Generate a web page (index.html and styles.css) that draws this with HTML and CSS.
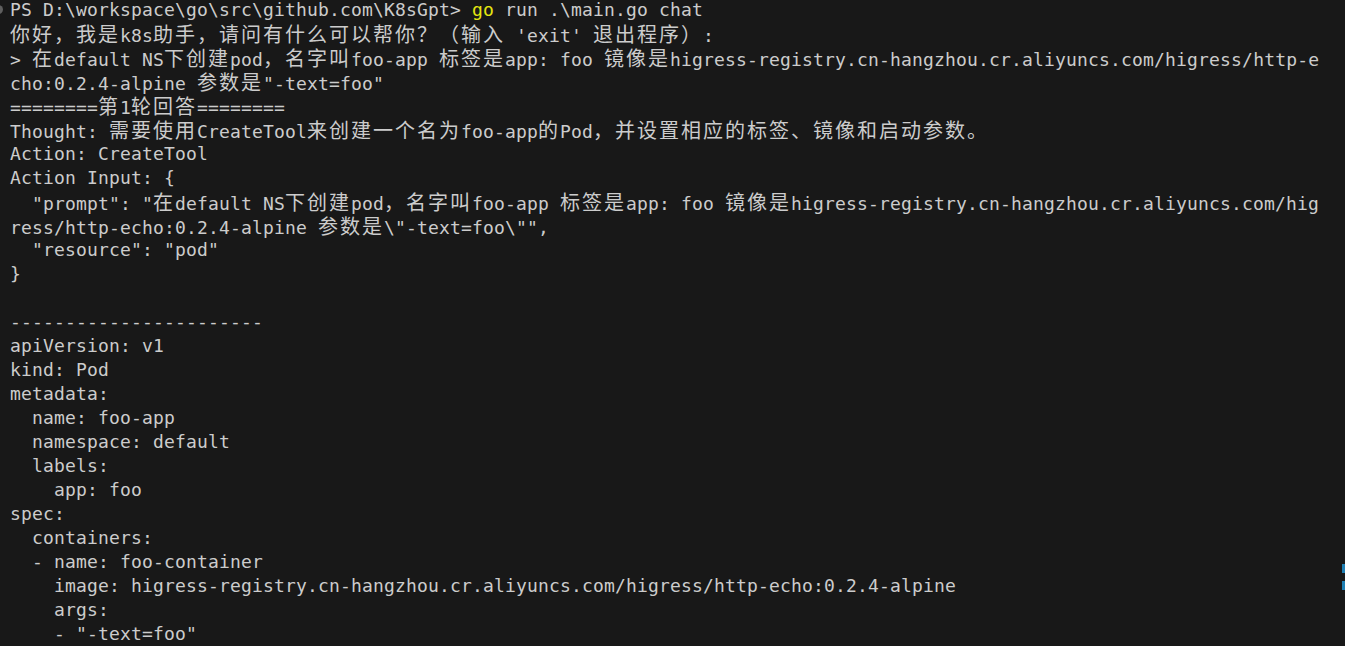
FILE: index.html
```html
<!DOCTYPE html>
<html lang="zh-CN">
<head>
<meta charset="utf-8">
<title>Terminal</title>
<link rel="stylesheet" href="styles.css">
</head>
<body>
<div class="terminal">
  <span class="cmd-mark"></span>
  <div class="screen">
    <div class="ln">PS D:\workspace\go\src\github.com\K8sGpt&gt; <span class="y">go</span> run .\main.go chat</div>
    <div class="ln"><span class="cj">你好，我是</span>k8s<span class="cj">助手，请问有什么可以帮你？（输入</span> 'exit' <span class="cj">退出程序）</span>:</div>
    <div class="ln">&gt; <span class="cj">在</span>default NS<span class="cj">下创建</span>pod<span class="cj">，名字叫</span>foo-app <span class="cj">标签是</span>app: foo <span class="cj">镜像是</span>higress-registry.cn-hangzhou.cr.aliyuncs.com/higress/http-e</div>
    <div class="ln">cho:0.2.4-alpine <span class="cj">参数是</span>"-text=foo"</div>
    <div class="ln">========<span class="cj">第</span>1<span class="cj">轮回答</span>========</div>
    <div class="ln">Thought: <span class="cj">需要使用</span>CreateTool<span class="cj">来创建一个名为</span>foo-app<span class="cj">的</span>Pod<span class="cj">，并设置相应的标签、镜像和启动参数。</span></div>
    <div class="ln">Action: CreateTool</div>
    <div class="ln">Action Input: {</div>
    <div class="ln">  "prompt": "<span class="cj">在</span>default NS<span class="cj">下创建</span>pod<span class="cj">，名字叫</span>foo-app <span class="cj">标签是</span>app: foo <span class="cj">镜像是</span>higress-registry.cn-hangzhou.cr.aliyuncs.com/hig</div>
    <div class="ln">ress/http-echo:0.2.4-alpine <span class="cj">参数是</span>\"-text=foo\"",</div>
    <div class="ln">  "resource": "pod"</div>
    <div class="ln">}</div>
    <div class="ln"></div>
    <div class="ln">-----------------------</div>
    <div class="ln">apiVersion: v1</div>
    <div class="ln">kind: Pod</div>
    <div class="ln">metadata:</div>
    <div class="ln">  name: foo-app</div>
    <div class="ln">  namespace: default</div>
    <div class="ln">  labels:</div>
    <div class="ln">    app: foo</div>
    <div class="ln">spec:</div>
    <div class="ln">  containers:</div>
    <div class="ln">  - name: foo-container</div>
    <div class="ln">    image: higress-registry.cn-hangzhou.cr.aliyuncs.com/higress/http-echo:0.2.4-alpine</div>
    <div class="ln">    args:</div>
    <div class="ln">    - "-text=foo"</div>
  </div>
  <span class="ruler-mark m1"></span>
  <span class="ruler-mark m2"></span>
</div>
</body>
</html>
```
FILE: styles.css
```css
html, body {
  margin: 0;
  padding: 0;
  background: #181818;
  overflow: hidden;
}

.terminal {
  position: relative;
  width: 1345px;
  height: 646px;
  box-sizing: border-box;
  padding: 0 0 0 10px;
  background: #181818;
  color: #cccccc;
  font-family: "DejaVu Sans Mono", "Noto Sans CJK SC", monospace;
  font-size: 18px;
  letter-spacing: 0.164px;
  overflow: hidden;
}

.screen {
  margin-top: -2px;
}

.ln {
  height: 24px;
  line-height: 24px;
  white-space: pre;
}

.cj {
  font-family: "Noto Sans CJK SC", sans-serif;
  font-size: 20px;
  line-height: 24px;
  letter-spacing: 2px;
}

.y {
  color: #e5e510;
}

.cmd-mark {
  position: absolute;
  left: -6px;
  top: 5px;
  width: 9px;
  height: 9px;
  border-radius: 50%;
  background: #5f5f5f;
}

.ruler-mark {
  position: absolute;
  right: 0;
  width: 3px;
  background: #1f7fb3;
}

.m1 {
  top: 564px;
  height: 9px;
}

.m2 {
  top: 581px;
  height: 9px;
}
```
